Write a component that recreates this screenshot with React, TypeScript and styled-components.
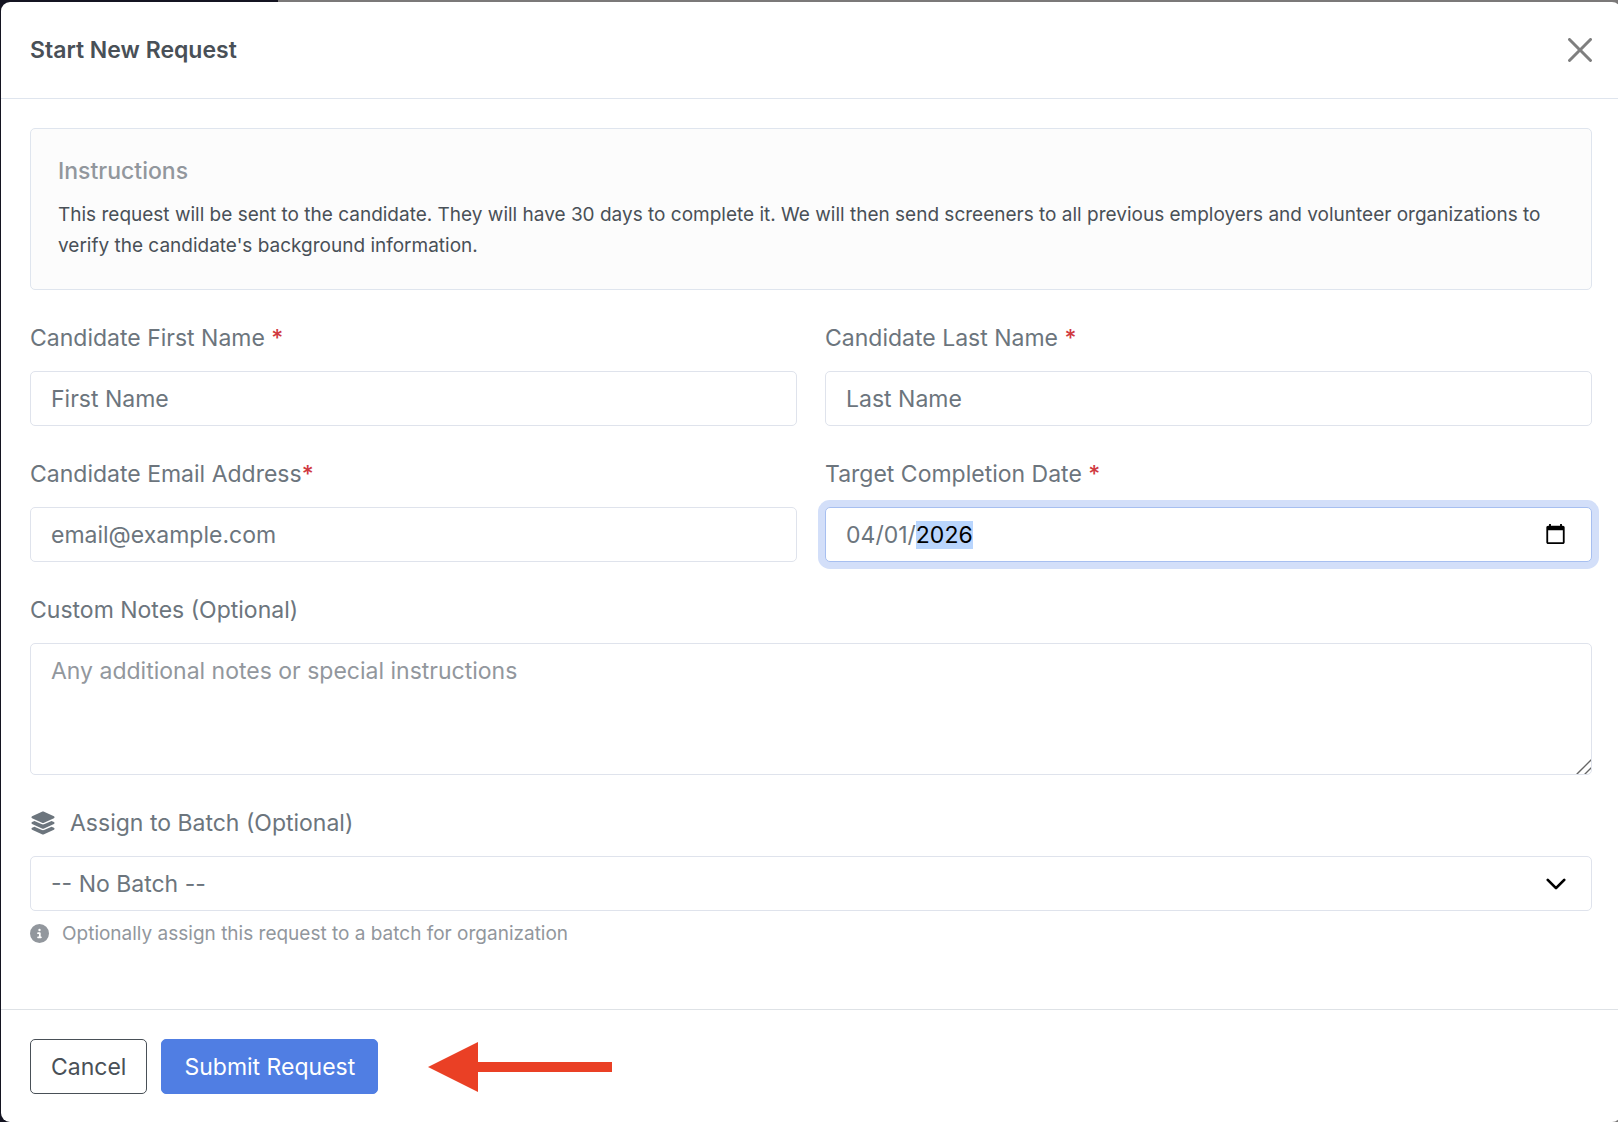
import React from "react";
import styled, { createGlobalStyle, css } from "styled-components";
import { FaLayerGroup, FaCircleInfo } from "react-icons/fa6";

const GlobalStyle = createGlobalStyle`
  *, *::before, *::after { box-sizing: border-box; }
  body {
    margin: 0;
    overflow-x: hidden;
    font-family: Inter, "Noto Sans", sans-serif;
    font-size: 23px;
    line-height: 36px;
    color: #6c757d;
  }
`;

const Backdrop = styled.div`
  display: flex;
  min-height: 100vh;
  padding: 2px 0 0 1px;
  overflow: hidden;
  background: linear-gradient(to right, #141421 278px, #7b7979 278px);
`;

const Dialog = styled.form`
  flex: 1;
  display: flex;
  flex-direction: column;
  margin-right: -3px;
  background: #fff;
  border-radius: 9px;
`;

const Header = styled.header`
  display: flex;
  align-items: center;
  justify-content: space-between;
  padding: 30px 29px;
  border-bottom: 1px solid #dfe5ee;
`;

const Title = styled.h1`
  margin: 0;
  font-size: 23px;
  line-height: 36px;
  font-weight: 600;
  color: #495057;
`;

const CloseButton = styled.button`
  display: flex;
  padding: 0;
  border: 0;
  background: none;
  color: #7f7f7f;
  cursor: pointer;
`;

const Body = styled.div`
  flex: 1;
  display: grid;
  grid-template-columns: 1fr 1fr;
  align-content: start;
  gap: 30px 28px;
  padding: 29px;
`;

const Instructions = styled.section`
  grid-column: 1 / -1;
  padding: 24px 27px 28px;
  border: 1px solid #dfe5ee;
  border-radius: 5px;
  background: #fcfcfc;
  color: #495057;
`;

const InstructionsTitle = styled.h2`
  margin: 0 0 10px;
  font-size: 23px;
  line-height: 36px;
  font-weight: 500;
  color: #92979d;
`;

const InstructionsText = styled.p`
  margin: 0;
  font-size: 19px;
  line-height: 31px;
`;

const Field = styled.div<{ $wide?: boolean }>`
  display: flex;
  flex-direction: column;
  min-width: 0;
  ${({ $wide }) => $wide && "grid-column: 1 / -1;"}
`;

const Label = styled.label`
  display: flex;
  align-items: center;
  margin-bottom: 15px;
  white-space: pre;

  svg {
    margin-right: 14px;
  }
`;

const Required = styled.span`
  font-weight: 500;
  color: #d0393f;
`;

const control = css`
  width: 100%;
  border: 1px solid #dfe3ec;
  border-radius: 5px;
  background-color: #fff;
  font: inherit;
  color: #6c757d;
  outline: none;
`;

const Input = styled.input<{ $active?: boolean }>`
  ${control}
  height: 55px;
  padding: 0 20px;

  &::placeholder {
    color: #6c757d;
    opacity: 1;
  }

  &::-webkit-datetime-edit {
    padding: 0;
  }

  &::-webkit-datetime-edit-fields-wrapper {
    padding: 0;
  }

  &::-webkit-datetime-edit-month-field,
  &::-webkit-datetime-edit-day-field,
  &::-webkit-datetime-edit-year-field {
    padding: 0;
  }

  &::-webkit-calendar-picker-indicator {
    width: 23px;
    height: 23px;
    padding: 0;
    margin: 0 4px 0 0;
  }

  ${({ $active }) =>
    $active &&
    css`
      border-color: #a7bff0;
      box-shadow: 0 0 0 7px #d3dff9;

      &::-webkit-datetime-edit-year-field {
        background: #b9d5fd;
        color: #000;
      }
    `}
`;

const resizeGrip =
  "data:image/svg+xml,%3Csvg xmlns='http://www.w3.org/2000/svg' viewBox='0 0 17 17'%3E%3Cpath d='M1 15 15 1M9 15l6-6' stroke='%23666' stroke-width='1.4' stroke-linecap='round'/%3E%3C/svg%3E";

const TextArea = styled.textarea`
  ${control}
  display: block;
  height: 132px;
  padding: 9px 20px;
  resize: vertical;

  &::placeholder {
    color: #92979d;
    opacity: 1;
  }

  &::-webkit-scrollbar {
    width: 18px;
    height: 18px;
  }

  &::-webkit-resizer {
    background: url("${resizeGrip}") left top / 17px 17px no-repeat;
  }
`;

const chevron =
  "data:image/svg+xml,%3Csvg xmlns='http://www.w3.org/2000/svg' viewBox='0 0 16 16'%3E%3Cpath fill='none' stroke='%23000' stroke-linecap='round' stroke-linejoin='round' stroke-width='2' d='m2 5 6 6 6-6'/%3E%3C/svg%3E";

const Select = styled.select`
  ${control}
  height: 55px;
  padding: 0 60px 0 20px;
  appearance: none;
  background-image: url("${chevron}");
  background-repeat: no-repeat;
  background-position: right 24px center;
  background-size: 22px 22px;
`;

const Hint = styled.p`
  display: flex;
  align-items: center;
  gap: 13px;
  margin: 7px 0 0;
  font-size: 19px;
  line-height: 31px;
  color: #92979d;
`;

const Footer = styled.footer`
  display: flex;
  align-items: center;
  gap: 14px;
  padding: 29px 29px 28px;
  border-top: 1px solid #dee2e6;
`;

const Button = styled.button<{ $primary?: boolean }>`
  height: 55px;
  padding: 0 ${({ $primary }) => ($primary ? "22px" : "20px")};
  border: 1px solid ${({ $primary }) => ($primary ? "#507ee3" : "#495057")};
  border-radius: 5px;
  background: ${({ $primary }) => ($primary ? "#507ee3" : "#fff")};
  color: ${({ $primary }) => ($primary ? "#fff" : "#495057")};
  font: inherit;
  cursor: pointer;
`;

const Pointer = styled.svg`
  display: block;
  margin-left: 36px;
`;

export default function App() {
  return (
    <>
      <GlobalStyle />
      <Backdrop>
        <Dialog role="dialog" aria-labelledby="title" onSubmit={(e) => e.preventDefault()}>
          <Header>
            <Title id="title">Start New Request</Title>
            <CloseButton type="button" aria-label="Close">
              <svg width="24" height="24" viewBox="0 0 16 16" fill="currentColor">
                <path d="M.293.293a1 1 0 0 1 1.414 0L8 6.586 14.293.293a1 1 0 1 1 1.414 1.414L9.414 8l6.293 6.293a1 1 0 0 1-1.414 1.414L8 9.414l-6.293 6.293a1 1 0 0 1-1.414-1.414L6.586 8 .293 1.707a1 1 0 0 1 0-1.414z" />
              </svg>
            </CloseButton>
          </Header>

          <Body>
            <Instructions>
              <InstructionsTitle>Instructions</InstructionsTitle>
              <InstructionsText>
                This request will be sent to the candidate. They will have 30 days to complete it. We
                will then send screeners to all previous employers and volunteer organizations to
                verify the candidate's background information.
              </InstructionsText>
            </Instructions>

            <Field>
              <Label htmlFor="first">
                Candidate First Name <Required>*</Required>
              </Label>
              <Input id="first" type="text" placeholder="First Name" />
            </Field>
            <Field>
              <Label htmlFor="last">
                Candidate Last Name <Required>*</Required>
              </Label>
              <Input id="last" type="text" placeholder="Last Name" />
            </Field>
            <Field>
              <Label htmlFor="email">
                Candidate Email Address<Required>*</Required>
              </Label>
              <Input id="email" type="email" placeholder="email@example.com" />
            </Field>
            <Field>
              <Label htmlFor="target">
                Target Completion Date <Required>*</Required>
              </Label>
              <Input id="target" type="date" defaultValue="2026-04-01" $active />
            </Field>

            <Field $wide>
              <Label htmlFor="notes">Custom Notes (Optional)</Label>
              <TextArea id="notes" placeholder="Any additional notes or special instructions" />
            </Field>

            <Field $wide>
              <Label htmlFor="batch">
                <FaLayerGroup size={26} />
                Assign to Batch (Optional)
              </Label>
              <Select id="batch" defaultValue="none">
                <option value="none">-- No Batch --</option>
              </Select>
              <Hint>
                <FaCircleInfo size={19} />
                Optionally assign this request to a batch for organization
              </Hint>
            </Field>
          </Body>

          <Footer>
            <Button type="button">Cancel</Button>
            <Button type="submit" $primary>
              Submit Request
            </Button>
            <Pointer width="184" height="50" viewBox="0 0 184 50" aria-hidden="true">
              <path d="M0 25 50 0v20h134v10H50v20z" fill="#ea4025" />
            </Pointer>
          </Footer>
        </Dialog>
      </Backdrop>
    </>
  );
}
